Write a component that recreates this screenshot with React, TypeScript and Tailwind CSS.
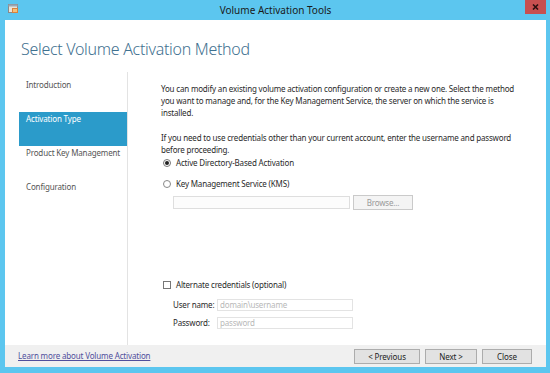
import React from "react";

const FONT = { fontFamily: '"Noto Sans", "Open Sans", Arial, sans-serif' };

function AppIcon() {
  return (
    <svg width="11" height="11" viewBox="0 0 11 11">
      <rect x="0.5" y="1.5" width="9" height="8" fill="#e9e4d8" stroke="#8a8a8a" />
      <rect x="0.5" y="1.5" width="9" height="2" fill="#9aa7b5" />
      <rect x="4" y="5" width="6" height="5" fill="#d9813b" />
      <rect x="5" y="6" width="4" height="3" fill="#f5c078" />
    </svg>
  );
}

function SideItem({ label, active }: { label: string; active?: boolean }) {
  return (
    <div
      className={
        "h-[34px] pl-[7px] pt-[1px] leading-[11px] text-[8px] tracking-[-0.15px] whitespace-nowrap " +
        (active ? "bg-[#2b9bca] text-white" : "text-[#555]")
      }
    >
      {label}
    </div>
  );
}

function Btn({ label, w }: { label: string; w: string }) {
  return (
    <button
      className={
        w +
        " h-[15px] border border-[#acacac] bg-[#e2e2e2] text-[8px] tracking-[-0.1px] leading-[13px] text-[#222]"
      }
    >
      {label}
    </button>
  );
}

export default function App() {
  return (
    <div
      className="w-[550px] h-[373px] bg-[#5cc6ef] flex flex-col pl-[5px] pr-[4px] pb-[6px]"
      style={FONT}
    >
      {/* Title bar */}
      <div className="h-[20px] relative flex items-center justify-center">
        <div className="absolute left-[3px] top-[3px]">
          <AppIcon />
        </div>
        <span className="text-[10px] text-[#1a1a1a]">Volume Activation Tools</span>
        <div className="absolute right-[0px] top-0 w-[21px] h-[14px] bg-[#c75050] flex items-center justify-center">
          <svg width="7" height="6" viewBox="0 0 7 6">
            <path d="M1 0.5 L6 5.5 M6 0.5 L1 5.5" stroke="#2a1010" strokeWidth="1.6" />
          </svg>
        </div>
      </div>

      {/* Window body */}
      <div className="flex-1 bg-white flex flex-col">
        <div className="h-[52px] pl-[16px] pt-[18px]">
          <h1 className="text-[16px] font-light tracking-[-0.3px] leading-[22px] text-[#3f7190]">
            Select Volume Activation Method
          </h1>
        </div>

        <div className="flex-1 flex">
          {/* Sidebar */}
          <div className="w-[123px] pl-[14px] pt-[6px] border-r border-[#e3e3e3] flex flex-col">
            <SideItem label="Introduction" />
            <SideItem label="Activation Type" active />
            <SideItem label="Product Key Management" />
            <SideItem label="Configuration" />
          </div>

          {/* Main */}
          <div className="flex-1 pl-[33px] pr-[24px] pt-[11px] text-[8px] tracking-[-0.18px] leading-[12px] text-[#2a2a2a]">
            <p>
              You can modify an existing volume activation configuration or create a new one. Select the method
              you want to manage and, for the Key Management Service, the server on which the service is
              installed.
            </p>
            <p className="mt-[13px]">
              If you need to use credentials other than your current account, enter the username and password
              before proceeding.
            </p>

            <div className="mt-[1px] flex items-center gap-[5px] h-[12px] pl-[2px]">
              <span className="w-[8px] h-[8px] rounded-full border border-[#777] flex items-center justify-center">
                <span className="w-[4px] h-[4px] rounded-full bg-[#222]" />
              </span>
              <span>Active Directory-Based Activation</span>
            </div>
            <div className="mt-[9px] flex items-center gap-[5px] h-[12px] pl-[2px]">
              <span className="w-[8px] h-[8px] rounded-full border border-[#888]" />
              <span>Key Management Service (KMS)</span>
            </div>
            <div className="mt-[5px] pl-[12px] flex items-center gap-[3px]">
              <div className="w-[177px] h-[13px] border border-[#dedede] bg-[#fcfcfc]" />
              <div className="w-[60px] h-[15px] border border-[#cacaca] bg-[#f4f4f4] text-[#9a9a9a] flex items-center justify-center">
                Browse...
              </div>
            </div>

            <div className="mt-[69px] flex items-center gap-[5px] h-[12px] pl-[2px]">
              <span className="w-[8px] h-[8px] border border-[#777] bg-white" />
              <span>Alternate credentials (optional)</span>
            </div>
            <div className="mt-[8px] pl-[12px] flex flex-col gap-[6px]">
              <div className="flex items-center">
                <span className="w-[44px] whitespace-nowrap">User name:</span>
                <div className="w-[136px] h-[12px] border border-[#e3e3e3] text-[#b8b8b8] pl-[2px] leading-[10px]">
                  domain\username
                </div>
              </div>
              <div className="flex items-center">
                <span className="w-[44px] whitespace-nowrap">Password:</span>
                <div className="w-[136px] h-[12px] border border-[#e3e3e3] text-[#b8b8b8] pl-[2px] leading-[10px]">
                  password
                </div>
              </div>
            </div>
          </div>
        </div>

        {/* Footer */}
        <div className="h-[22px] bg-[#f0f0f0] flex items-center justify-between pl-[13px] pr-[14px]">
          <a className="text-[8px] tracking-[-0.15px] text-[#4f4f9c] underline">
            Learn more about Volume Activation
          </a>
          <div className="flex gap-[5px]">
            <Btn label="< Previous" w="w-[66px]" />
            <Btn label="Next >" w="w-[52px]" />
            <Btn label="Close" w="w-[50px]" />
          </div>
        </div>
      </div>
    </div>
  );
}
